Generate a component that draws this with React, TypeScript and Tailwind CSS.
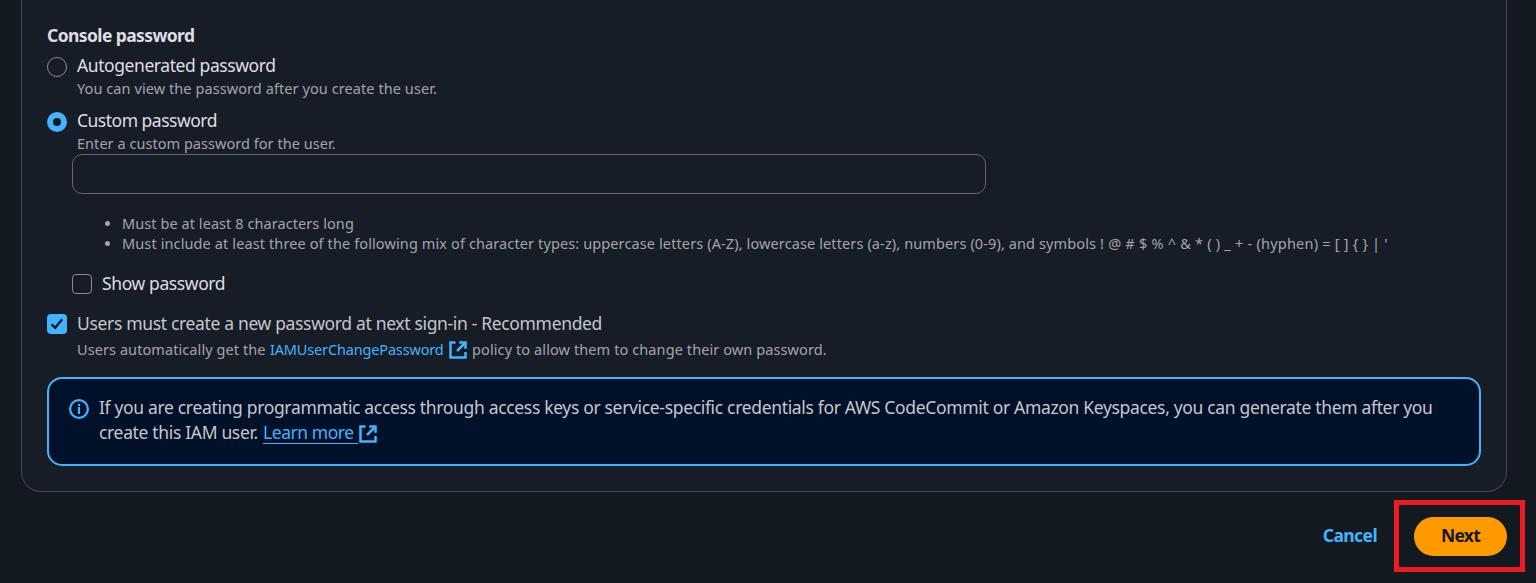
import React from "react";

function ExternalIcon() {
  return (
    <svg viewBox="0 0 16 16" className="h-5 w-5 shrink-0 fill-none stroke-[#42b4ff] stroke-2">
      <path d="M9 2h5v5" />
      <path d="m7.2 8.8 6.8-6.8" />
      <path d="M14 9.6V14H2V2h4" />
    </svg>
  );
}

function InfoIcon() {
  return (
    <svg viewBox="0 0 20 20" className="mt-[3px] h-5 w-5 shrink-0 fill-none stroke-[#42b4ff] stroke-[2.2]">
      <circle cx="10" cy="10" r="8.9" />
      <path d="M10 7.9V15M10 4.9v2" />
    </svg>
  );
}

export default function App() {
  return (
    <div className="h-[583px] w-[1536px] overflow-hidden bg-[#131920] pl-[21px] pr-[11px] font-['Noto_Sans',sans-serif] whitespace-nowrap">
      <main className="h-[492px] w-[1486px] rounded-b-[20px] border border-t-0 border-[#424650] bg-[#171d26] px-[25px] pt-[23px] text-[17.5px] leading-[25px] text-[#dedee3]">
        <h2 className="font-bold tracking-[-0.6px]">Console password</h2>

        <label className="mt-[5px] flex gap-[10px]">
          <span className="mt-1 h-5 w-5 shrink-0 rounded-full border border-[#8c8c94]" />
          <span className="flex flex-col">
            <span className="tracking-[-0.42px]">Autogenerated password</span>
            <span className="text-[14.5px] leading-5 tracking-[0.08px] text-[#a4a4ad]">You can view the password after you create the user.</span>
          </span>
        </label>

        <label className="mt-[10px] flex gap-[10px]">
          <span className="mt-1 flex h-5 w-5 shrink-0 items-center justify-center rounded-full bg-[#42b4ff]">
            <span className="h-2 w-2 rounded-full bg-[#131920]" />
          </span>
          <span className="flex flex-col">
            <span className="tracking-[-0.5px]">Custom password</span>
            <span className="pb-px text-[14.5px] leading-5 tracking-[0.04px] text-[#a4a4ad]">Enter a custom password for the user.</span>
          </span>
        </label>

        <div className="pl-[25px]">
          <div className="h-10 w-[914px] rounded-[10px] border border-[#656871]" />
          <ul className="mt-5 text-[14.5px] leading-[18px] text-[#a4a4ad]">
            <li className="flex h-5 items-start pl-[33px]">
              <span className="mt-[7px] mr-[12px] h-[5px] w-[5px] rounded-full bg-[#a4a4ad]" />
              <span className="tracking-[0.07px]">Must be at least 8 characters long</span>
            </li>
            <li className="flex h-5 items-start pl-[33px]">
              <span className="mt-[7px] mr-[12px] h-[5px] w-[5px] rounded-full bg-[#a4a4ad]" />
              <span className="tracking-[0.115px]">
                Must include at least three of the following mix of character types: uppercase letters (A-Z), lowercase letters (a-z), numbers (0-9), and symbols{" "}
                <span className="tracking-[0.22px]">{"! @ # $ % ^ & * ( ) _ + - (hyphen) = [ ] { } | '"}</span>
              </span>
            </li>
          </ul>
          <label className="mt-[17px] flex gap-[10px]">
            <span className="mt-[3px] h-5 w-5 shrink-0 rounded-[4px] border border-[#8c8c94]" />
            <span className="tracking-[-0.39px]">Show password</span>
          </label>
        </div>

        <label className="mt-[15px] flex gap-[10px]">
          <span className="mt-[3px] h-5 w-5 shrink-0 rounded-[4px] bg-[#42b4ff]">
            <svg viewBox="0 0 20 20" className="h-5 w-5 fill-none stroke-[#131920] stroke-[2.4]">
              <path d="m4.6 10.3 3.6 3.5 7-8.5" />
            </svg>
          </span>
          <span className="tracking-[-0.34px] text-[#c6c6cd]">Users must create a new password at next sign-in - Recommended</span>
        </label>
        <p className="mt-1 flex h-5 pl-[30px] text-[14.5px] leading-[18px] text-[#a4a4ad]">
          <span className="w-[193px] tracking-[0.08px]">Users automatically get the</span>
          <a className="w-[178px] tracking-[-0.16px] text-[#42b4ff]">IAMUserChangePassword</a>
          <ExternalIcon />
          <span className="ml-1 tracking-[0.1px]">policy to allow them to change their own password.</span>
        </p>

        <section className="mt-[17px] flex h-[89px] w-[1434px] gap-[10px] rounded-[15px] border-2 border-[#42b4ff] bg-[#001129] px-5 pt-[17px] text-[#c6c6cd]">
          <InfoIcon />
          <div className="-mt-px">
            <p className="tracking-[-0.335px]">If you are creating programmatic access through access keys or service-specific credentials for AWS CodeCommit or Amazon Keyspaces, you can generate them after you</p>
            <p className="flex">
              <span className="w-[164px] tracking-[-0.34px]">create this IAM user.</span>
              <a className="h-[24px] w-[95px] border-b border-[#42b4ff] tracking-[-0.45px] text-[#42b4ff]">Learn more</a>
              <span className="mt-1"><ExternalIcon /></span>
            </p>
          </div>
        </section>
      </main>

      <footer className="mt-2 flex h-[72px] items-start justify-end text-[17.5px] font-bold">
        <button className="mt-[17px] mr-[17px] h-[39px] pb-[2px] tracking-[-0.6px] text-[#42b4ff]">Cancel</button>
        <div className="h-[72px] w-[131px] border-[5px] border-[#ed1c24] pt-3 pl-[15px]">
          <button className="h-[39px] w-[93px] rounded-full bg-[#ff9900] pb-[2px] tracking-[-0.7px] text-[#131920]">Next</button>
        </div>
      </footer>
    </div>
  );
}
